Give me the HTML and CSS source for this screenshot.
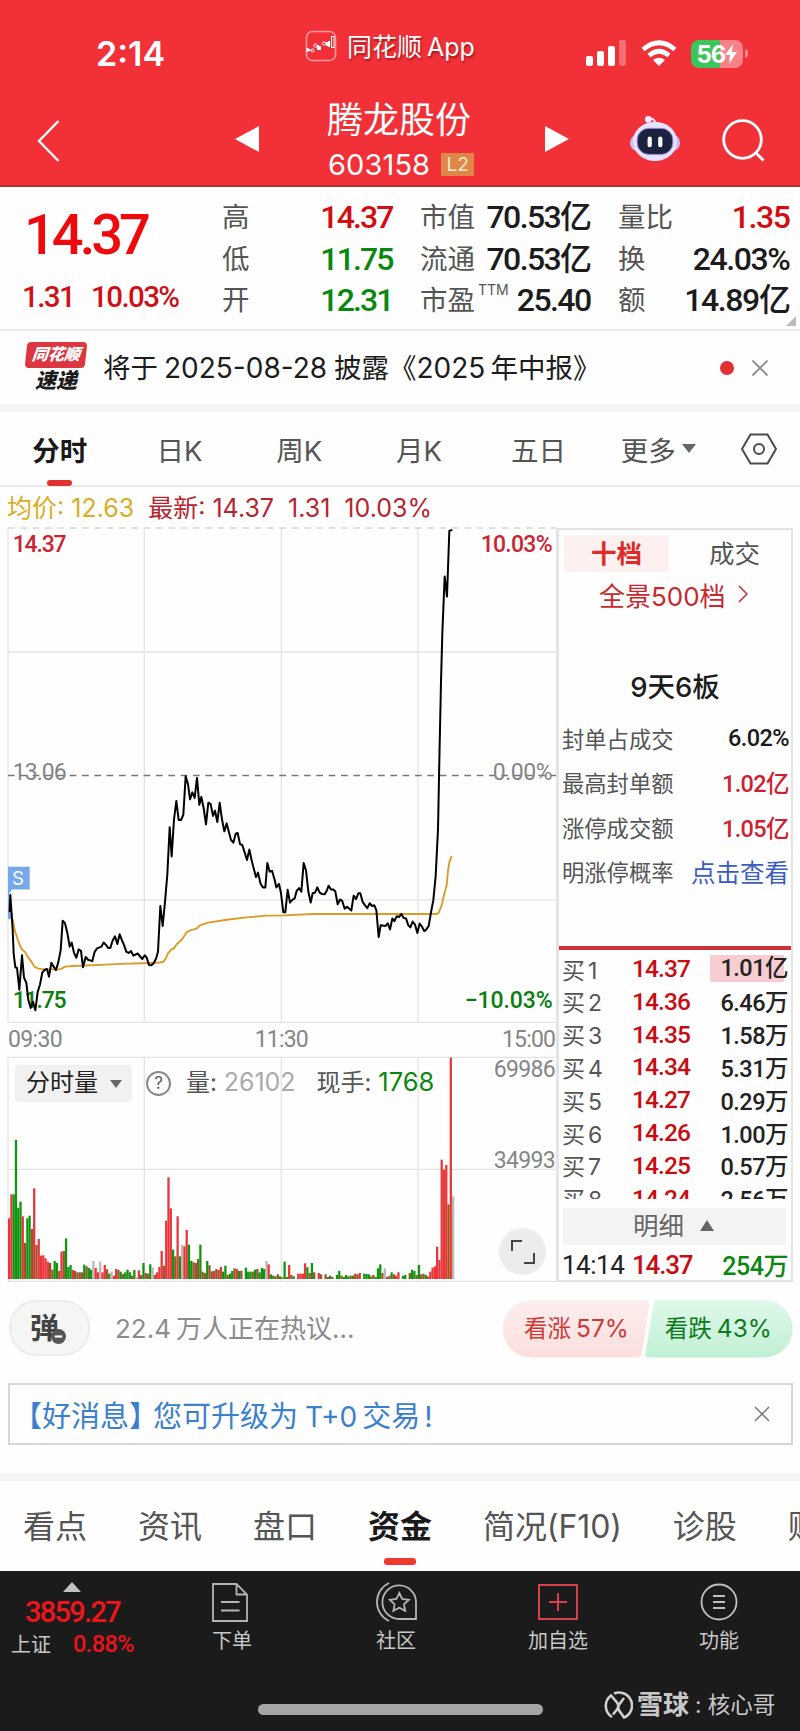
FILE: index.html
```
<!DOCTYPE html>
<html lang="zh-CN">
<head>
  <meta charset="utf-8">
  <title>腾龙股份 603158</title>
  <link rel="stylesheet" href="styles.css">
</head>
<body>
  <header class="header">
    <div class="statusbar">
      <span class="clock">2:14</span>
      <div class="app">
        <svg class="app-icon" width="32" height="32" viewBox="0 0 32 32" fill="none" stroke="#fff">
          <rect x="1.5" y="1.5" width="29" height="29" rx="6" stroke="#ff9a9a" stroke-width="1.6"/>
          <path d="M2.5 18v4M4.500 19v2M13 15v5M15 16v4M24 11v6M22 12v4" stroke-width="2"/>
          <circle cx="7.500" cy="20.500" r="1.500"/><circle cx="10.500" cy="15.500" r="1.600"/><circle cx="19" cy="13.500" r="1.600"/>
          <rect x="26.500" y="6.500" width="2.500" height="11"/>
        </svg>
        <span>同花顺 App</span>
      </div>
      <div class="sys">
        <svg width="40" height="27" viewBox="0 0 40 27" fill="#fff">
          <rect x="0" y="16" width="7" height="10" rx="2"/><rect x="11" y="11" width="7" height="15" rx="2"/>
          <rect x="22" y="6" width="7" height="20" rx="2"/><rect x="33" y="0" width="7" height="26" rx="2" opacity=".3"/>
        </svg>
        <svg class="wifi" width="36" height="27" viewBox="0 0 36 27" fill="none" stroke="#fff" stroke-width="4.600">
          <path d="M2 9.500Q18-4 34 9.500M8 15.500Q18 7 28 15.500"/>
          <path d="M12 20Q18 15.500 24 20L18 26Z" fill="#fff" stroke="none"/>
        </svg>
        <div class="battery"><span>56</span><svg width="12" height="20" viewBox="0 0 12 20"><path d="M8 0L0 11h5l-1 9 8-12H7z" fill="#fff"/></svg></div>
        <i class="nub"></i>
      </div>
    </div>
    <div class="titlebar">
      <svg class="back" width="24" height="42" viewBox="0 0 24 42" fill="none" stroke="#fff" stroke-width="2.400"><path d="M22.500 1L3 21l19.500 20"/></svg>
      <svg class="prev" width="24" height="26" viewBox="0 0 24 26"><path d="M24 0v26L0 13z" fill="#fff"/></svg>
      <div class="stock">
        <div class="name">腾龙股份</div>
        <div class="code">603158<b>L2</b></div>
      </div>
      <svg class="next" width="24" height="26" viewBox="0 0 24 26"><path d="M0 0v26l24-13z" fill="#fff"/></svg>
      <svg class="robot" width="50" height="47" viewBox="0 0 52 48">
        <path d="M26 8q0-5-7-5" fill="none" stroke="#eee9ff" stroke-width="2"/><circle cx="19" cy="4" r="3.500" fill="#f3efff"/>
        <rect x="0" y="20" width="52" height="17" rx="8" fill="#c4baf6"/>
        <ellipse cx="26" cy="27" rx="23" ry="20.500" fill="#e6e1fd"/>
        <rect x="7.500" y="13.500" width="37" height="27" rx="12" fill="#1b2240" stroke="#8d82cf" stroke-width="1"/>
        <path d="M20.500 24v7M31.500 24v7" stroke="#fff" stroke-width="4.400" stroke-linecap="round"/>
      </svg>
      <svg class="search" width="43" height="43" viewBox="0 0 43 43" fill="none" stroke="#fff" stroke-width="2.800"><circle cx="20.500" cy="20.500" r="18.800"/><path d="M33.500 33.500l8 8"/></svg>
    </div>
  </header>

  <section class="quote">
    <div class="last">
      <div class="price num">14.37</div>
      <div class="change num"><span>1.31</span><span>10.03%</span></div>
    </div>
    <dl class="stats c1">
      <div><dt>高</dt><dd class="red">14.37</dd></div>
      <div><dt>低</dt><dd class="green">11.75</dd></div>
      <div><dt>开</dt><dd class="green">12.31</dd></div>
    </dl>
    <dl class="stats c2">
      <div><dt>市值</dt><dd>70.53亿</dd></div>
      <div><dt>流通</dt><dd>70.53亿</dd></div>
      <div><dt>市盈<sup>TTM</sup></dt><dd>25.40</dd></div>
    </dl>
    <dl class="stats c3">
      <div><dt>量比</dt><dd class="red">1.35</dd></div>
      <div><dt>换</dt><dd>24.03%</dd></div>
      <div><dt>额</dt><dd>14.89亿</dd></div>
    </dl>
    <i class="corner"></i>
  </section>

  <section class="news">
    <div class="news-logo"><span class="brand">同花顺</span><span class="express">速递</span></div>
    <p>将于<span class="date">2025-08-28</span>披露<span class="report">《<span class="yr">2025</span>年中报》</span></p>
    <i class="dot"></i>
    <svg width="18" height="18" viewBox="0 0 18 18" stroke="#8c8c8c" stroke-width="1.800"><path d="M1.500 1.500l15 15M16.500 1.500l-15 15"/></svg>
  </section>

  <nav class="tabs">
    <a class="on">分时</a><a>日K</a><a>周K</a><a>月K</a><a>五日</a><a>更多<i class="caret"></i></a>
    <svg width="36" height="32" viewBox="0 0 36 32" fill="none" stroke="#4a4a4a" stroke-width="2"><path d="M9.500 1.500h17L35 16l-8.500 14.500h-17L1 16z"/><circle cx="18" cy="16" r="5"/></svg>
  </nav>

  <div class="legend"><span class="avg">均价: 12.63</span><span>最新: 14.37</span><span>1.31</span><span>10.03%</span></div>

  <main class="market">
    <div class="charts">
      <svg class="price-chart" width="558" height="525" viewBox="0 21 1674 1525" preserveAspectRatio="none">
        <g stroke="#e4e4e4" stroke-width="4" fill="none">
          <path d="M24 24V1460M433 24V1460M844 24V1460M1254 24V1460M24 384H1668M24 1104H1668M24 1460H1668"/>
        </g>
        <path d="M24 24H1668" stroke="#c2c2c2" stroke-width="3" stroke-dasharray="20 17"/>
        <path d="M24 743H1668" stroke="#777" stroke-width="4" stroke-dasharray="20 17"/>
        <g class="axis">
          <text x="38" y="93" textLength="162" class="up">14.37</text>
          <text x="1442" y="93" textLength="216" class="up">10.03%</text>
          <text x="38" y="755" textLength="162">13.06</text>
          <text x="1478" y="755" textLength="180">0.00%</text>
          <text x="38" y="1418" textLength="162" class="down">11.75</text>
          <text x="1394" y="1418" textLength="264" class="down">−10.03%</text>
          <text x="24" y="1532" textLength="164">09:30</text>
          <text x="764" y="1532" textLength="162">11:30</text>
          <text x="1506" y="1532" textLength="162">15:00</text>
        </g>
        <path d="M24 1008h65v66H36l-8 10v76h-4z" fill="#76a9ea"/>
        <path d="M24 1142h14v18H24z" fill="#76a9ea"/>
        <text x="36" y="1062" class="mark">S</text>
        <polyline fill="none" stroke="#dd9a26" stroke-width="5.500" points="38,1160 45,1195 55,1225 65,1247 75,1255 85,1272 95,1285 103,1298 115,1304 135,1306 180,1306 195,1298 220,1296 300,1293 360,1290 430,1288 480,1286 490,1284 497,1275 505,1258 515,1248 522,1245 530,1233 545,1220 560,1198 572,1192 582,1190 590,1187 600,1178 625,1170 680,1162 740,1155 800,1150 850,1149 940,1145 1310,1145 1316,1142 1325,1120 1332,1090 1340,1062 1344,1020 1348,995 1355,977"/>
        <polyline fill="none" stroke="#000" stroke-width="6" stroke-linejoin="round" points="29,1140 31,1090 38,1190 41,1260 46,1300 51,1302 58,1365 66,1265 72,1330 79,1345 85,1395 92,1418 99,1400 106,1425 113,1372 120,1350 127,1315 134,1308 141,1305 147,1327 154,1287 161,1298 168,1308 175,1285 182,1250 188,1165 195,1172 202,1200 209,1240 215,1228 222,1258 229,1272 236,1248 243,1252 249,1300 257,1270 264,1278 277,1282 284,1255 291,1245 304,1240 311,1228 318,1235 325,1244 331,1244 338,1222 345,1210 352,1232 359,1204 366,1222 372,1235 379,1255 386,1258 393,1253 400,1266 413,1260 420,1268 427,1276 434,1265 440,1272 447,1293 454,1294 461,1288 468,1275 474,1255 481,1122 488,1180 495,1110 502,1030 509,893 515,978 522,870 529,817 536,872 543,872 550,857 557,745 564,768 570,812 577,792 584,808 591,750 598,828 604,805 611,838 618,885 625,822 632,826 639,860 645,845 652,878 659,822 666,870 673,905 680,882 693,930 700,938 707,912 713,910 720,942 727,945 741,988 748,958 755,990 768,1038 774,1025 782,1058 789,1068 796,1068 802,997 809,1022 816,1020 823,1042 829,1068 837,1058 843,1085 850,1140 856,1140 863,1075 870,1112 877,1104 884,1100 890,1078 897,1070 904,1080 911,997 918,1018 925,1080 932,1112 938,1085 945,1083 952,1068 959,1083 966,1087 974,1088 980,1078 986,1063 993,1074 1000,1074 1006,1080 1013,1117 1020,1103 1027,1108 1034,1130 1041,1124 1054,1135 1061,1092 1068,1102 1075,1085 1081,1085 1088,1110 1095,1120 1102,1128 1109,1114 1116,1122 1123,1120 1129,1134 1136,1212 1142,1178 1157,1180 1163,1172 1170,1190 1177,1158 1183,1166 1190,1152 1197,1154 1204,1145 1211,1157 1218,1158 1225,1178 1231,1184 1238,1167 1245,1176 1252,1200 1259,1173 1266,1182 1273,1195 1279,1190 1286,1180 1293,1140 1300,1105 1307,1035 1314,900 1318,700 1323,470 1327,330 1334,165 1341,223 1348,32 1357,30"/>
      </svg>
      <div class="volume">
        <svg width="558" height="232" viewBox="0 6 1674 696">
          <path d="M24 22V692M433 22V692M844 22V692M1254 22V692M24 22H1668M24 358H1668M24 694H1668" stroke="#e4e4e4" stroke-width="4" fill="none"/>
          <g id="bars"></g>
          <g class="axis">
            <text x="1481" y="80" textLength="186">69986</text>
            <text x="1481" y="354" textLength="186">34993</text>
          </g>
        </svg>
        <div class="vol-bar">
          <span class="vol-type">分时量<i class="caret"></i></span>
          <span class="help">?</span>
          <span class="vol">量: <em>26102</em></span>
          <span class="hand">现手: <em>1768</em></span>
        </div>
        <div class="expand"><svg width="24" height="24" viewBox="0 0 24 24" fill="none" stroke="#444" stroke-width="2"><path d="M1 11V1h10M23 13v10H13"/></svg></div>
      </div>
    </div>

    <aside class="side">
      <div class="side-tabs"><span class="on">十档</span><span>成交</span></div>
      <div class="full">全景500档<svg width="10" height="18" viewBox="0 0 10 18" fill="none" stroke="#c8282d" stroke-width="1.500"><path d="M1 1l8 8-8 8"/></svg></div>
      <div class="streak">9天6板</div>
      <ul class="limit">
        <li><span>封单占成交</span><b class="black">6.02%</b></li>
        <li><span>最高封单额</span><b>1.02亿</b></li>
        <li><span>涨停成交额</span><b>1.05亿</b></li>
        <li><span>明涨停概率</span><a>点击查看</a></li>
      </ul>
      <ul class="bids">
        <li><span>买<i>1</i></span><b>14.37</b><em class="hot">1.01亿</em></li>
        <li><span>买<i>2</i></span><b>14.36</b><em>6.46万</em></li>
        <li><span>买<i>3</i></span><b>14.35</b><em>1.58万</em></li>
        <li><span>买<i>4</i></span><b>14.34</b><em>5.31万</em></li>
        <li><span>买<i>5</i></span><b>14.27</b><em>0.29万</em></li>
        <li><span>买<i>6</i></span><b>14.26</b><em>1.00万</em></li>
        <li><span>买<i>7</i></span><b>14.25</b><em>0.57万</em></li>
        <li><span>买<i>8</i></span><b>14.24</b><em>2.56万</em></li>
      </ul>
      <div class="detail">明细<i class="caret up"></i></div>
      <div class="tick"><span>14:14</span><b>14.37</b><em>254万</em></div>
    </aside>
  </main>

  <section class="talk">
    <div class="danmu">弹<svg width="15" height="15" viewBox="0 0 14 14"><circle cx="7" cy="7" r="7" fill="#555"/><path d="M3.500 7h7" stroke="#fff" stroke-width="2"/></svg></div>
    <p>22.4<span>万人正在热议...</span></p>
    <div class="vote">
      <svg width="290" height="58" viewBox="0 0 290 58">
        <defs>
          <linearGradient id="bull" x2="0" y2="1"><stop stop-color="#fdeeee"/><stop offset="1" stop-color="#fbdfdd"/></linearGradient>
          <linearGradient id="bear" x2="0" y2="1"><stop stop-color="#e0f8ea"/><stop offset="1" stop-color="#c0f0d3"/></linearGradient>
        </defs>
        <path d="M28.500 0H143q4 0 3.500 4l-8 50q-.7 3.500-4 3.500H28.500a28.700 28.700 0 010-57.500z" fill="url(#bull)"/>
        <path d="M155 0h106a28.700 28.700 0 010 57.500H146q-4 0-3.500-3.500l8-50q.8-4 4.500-4z" fill="url(#bear)"/>
      </svg>
      <div class="vote-text"><span class="bull">看涨<i>57%</i></span><span class="bear">看跌<i>43%</i></span></div>
    </div>
  </section>

  <section class="notice">
    <p><span>【好消息】</span>您可升级为<span class="t0">T+0</span>交易<span class="ex">!</span></p>
    <svg width="16" height="16" viewBox="0 0 16 16" stroke="#777" stroke-width="1.500"><path d="M1 1l14 14M15 1L1 15"/></svg>
  </section>

  <nav class="info-tabs"><a>看点</a><a>资讯</a><a>盘口</a><a class="on">资金</a><a>简况(F10)</a><a>诊股</a><a>财务</a></nav>

  <footer class="footer">
    <div class="menu">
      <div class="index">
        <i></i>
        <div class="idx num">3859.27</div>
        <div class="sh">上证<b class="num">0.88%</b></div>
      </div>
      <a>
        <svg class="doc" width="36" height="40" viewBox="0 0 36 40" fill="none" stroke="#b4b4b4" stroke-width="1.800"><path d="M1 2h23.500L35 12.500V39H1zM24.500 2v10.500H35M9 20h18.500M9 28.500h18.500"/></svg>
        下单
      </a>
      <a>
        <svg width="42" height="40" viewBox="0 0 42 40" fill="none" stroke="#b4b4b4" stroke-width="1.800"><path d="M14 1a21 21 0 000 38M41 37H24A16.800 16.800 0 1141 20.500zM24.300 11l2.900 6 6.600.8-4.800 4.500 1.200 6.500-5.900-3.100-5.900 3.100 1.200-6.500-4.800-4.500 6.600-.8z"/></svg>
        社区
      </a>
      <a>
        <svg width="40" height="40" viewBox="0 0 40 40" fill="none" stroke="#d8404a" stroke-width="2"><path d="M1 3h38v34H1zM20 11v18M11 20h18"/></svg>
        加自选
      </a>
      <a>
        <svg width="38" height="40" viewBox="0 0 38 40" fill="none" stroke="#c0c0c0" stroke-width="1.800"><circle cx="19" cy="20" r="17.500"/><path d="M13 14h12M13 20h12M13 26h12"/></svg>
        功能
      </a>
    </div>
    <div class="bottom">
      <i class="home"></i>
      <div class="source">
        <svg width="30" height="30" viewBox="0 0 30 30" fill="none" stroke="#d0d0d0" stroke-width="2.600"><path d="M9 26A13 13 0 018 4.500l6 7q2.500 3.500 0 7l-4 5M11 2.500A13 13 0 0121 26.500l-4.500-6.500q-2.500-3.500 0-7L21 7"/></svg>
        <b>雪球</b><span>: 核心哥</span>
      </div>
    </div>
  </footer>

  <script>
    // one entry per minute: colour letter + height
    var volume = "r182 r254 g254 g417 g213 g232 r188 b108 g182 g190 b150 r272 b102 r120 r70 r71 r62 r52 b48 b28 g54 g48 r24 r82 b84 g122 g36 g42 r27 b24 b20 b20 b20 g43 b38 g33 g28 w54 r33 r20 w52 r20 r42 b29 g16 w22 r10 r30 b27 g22 b15 g20 g28 g20 b10 g27 w6 r26 b12 g48 b18 b16 g44 w34 r12 r20 r36 r84 b40 r175 r305 r212 g88 b68 r188 g68 w103 r98 r147 g103 g54 b50 b48 b60 g103 b22 b18 g54 b41 b23 r24 b30 b27 r36 g22 g40 b12 g16 g24 b32 r30 g24 b25 g0 g34 g22 g22 b22 g28 b30 g20 g33 g30 w54 r44 g14 b10 g8 b14 g8 r5 g52 g6 r42 b12 g8 g0 r16 r16 r16 r47 g35 b18 g48 b20 g0 r18 b14 g0 b14 b6 g10 b6 g0 g12 g24 b10 g6 g12 g8 b10 g10 r16 b14 r18 g0 g16 g15 g14 b8 b12 g6 g32 g44 b18 w32 b6 r10 g20 b14 r10 r20 g0 g10 g12 g0 b18 g28 g24 b12 g42 b14 b16 g12 r8 r22 r34 r38 r97 r57 r358 r328 r342 o224 r664 w248".split(" ");
    var colors = { r: "#e8363a", g: "#0f960f", b: "#96562a", w: "#c0b4b4", o: "#8a6210" };
    var bars = document.getElementById("bars");
    for (var i = 0; i < volume.length; i++) {
      var h = Number(volume[i].slice(1));
      var bar = document.createElementNS("http://www.w3.org/2000/svg", "rect");
      bar.setAttribute("x", 24 + i * 6.83);
      bar.setAttribute("y", 687 - h);
      bar.setAttribute("width", 6.83);
      bar.setAttribute("height", h);
      bar.setAttribute("fill", colors[volume[i][0]]);
      bars.appendChild(bar);
    }
  </script>
</body>
</html>
```

FILE: styles.css
```
* {
  box-sizing: border-box;
  margin: 0;
  padding: 0;
}
body {
  width: 800px;
  height: 1731px;
  overflow: hidden;
  background: #fefefe;
  color: #1c1c1c;
  font-family: Inter, "Noto Sans CJK SC", sans-serif;
}
i, em {
  font-style: normal;
}
ul {
  list-style: none;
}
svg {
  display: block;
  flex: none;
}
.num, dd {
  font-family: Roboto, "Noto Sans CJK SC", sans-serif;
  font-weight: 500;
}
.red { color: #d40b10; }
.green { color: #0a870f; }

/* header */
.header {
  height: 187px;
  background: #f23038;
  border-bottom: 2px solid #b4303a;
  color: #fff;
}
.statusbar {
  display: flex;
  height: 93px;
  padding-left: 96px;
}
.clock {
  width: 209px;
  padding-top: 33px;
  line-height: 42px;
  font-size: 34px;
  font-weight: 600;
}
.app {
  display: flex;
  width: 281px;
  padding-top: 30px;
  font-size: 25px;
  line-height: 34px;
  gap: 10px;
  word-spacing: -2px;
  text-shadow: 1px 2px 2px rgba(90, 0, 0, .5);
}
.sys {
  display: flex;
  padding-top: 40px;
}
.wifi { margin: 0 14px 0 15px; }
.battery {
  display: flex;
  align-items: center;
  justify-content: center;
  width: 52px;
  height: 28px;
  border-radius: 8px;
  background: linear-gradient(90deg, #3cc55b 56%, #f78288 56%);
  font-size: 24px;
  font-weight: 700;
  letter-spacing: -1px;
}
.nub {
  width: 3px;
  height: 9px;
  margin: 9px 0 0 2px;
  border-radius: 0 3px 3px 0;
  background: #f78288;
}
.titlebar {
  display: flex;
}
.back { margin: 27px 0 0 36px; }
.prev { margin: 33px 0 0 175px; }
.stock {
  width: 286px;
  padding-left: 68px;
}
.name {
  height: 54px;
  font-size: 36px;
  line-height: 54px;
}
.code {
  display: flex;
  align-items: center;
  height: 34px;
  padding-left: 1px;
  font-size: 29px;
  letter-spacing: .1px;
}
.code b {
  width: 33px;
  height: 23px;
  margin-left: 11px;
  background: #df8747;
  color: #ffe9cf;
  font-size: 19px;
  line-height: 23px;
  font-weight: 400;
  text-align: center;
}
.next { margin-top: 33px; }
.robot { margin: 22px 0 0 61px; }
.search { margin: 26px 0 0 42px; }

/* quote */
.quote {
  display: flex;
  position: relative;
  height: 144px;
  border-bottom: 2px solid #ececec;
}
.last {
  width: 222px;
}
.price {
  padding: 14px 0 0 24px;
  height: 84px;
  color: #ee0a0c;
  font-size: 56px;
  line-height: 68px;
  letter-spacing: -4px;
}
.change {
  display: flex;
  gap: 17px;
  padding-left: 22px;
  color: #cf1016;
  font-size: 29.500px;
  line-height: 52px;
  letter-spacing: -1.600px;
}
.stats {
  padding-top: 9px;
}
.stats div {
  display: flex;
  justify-content: space-between;
  height: 41.500px;
  line-height: 42px;
}
.stats dt {
  color: #555;
  font-size: 27.500px;
}
.stats dd {
  margin-right: 1.500px;
  font-size: 32px;
  letter-spacing: -1.600px;
}
.stats sup {
  display: inline-block;
  margin-left: 3px;
  font-size: 14px;
  line-height: 14px;
  vertical-align: 15px;
}
.c1 { width: 172px; }
.c1 dd { letter-spacing: -1.900px; }
.c2 { width: 172px; margin-left: 26px; }
.c3 { width: 173px; margin-left: 26px; }
.c3 dd { letter-spacing: -1.400px; }
.corner {
  position: absolute;
  right: 4px;
  bottom: 3px;
  border: 5px solid transparent;
  border-right-color: #bbb;
  border-bottom-color: #bbb;
}

/* news */
.news {
  display: flex;
  align-items: center;
  height: 81px;
  border-bottom: 8px solid #f4f4f4;
}
.news-logo {
  width: 60px;
  margin-left: 26px;
  font-weight: 900;
  font-style: italic;
  text-align: center;
}
.brand {
  display: block;
  height: 26px;
  border-radius: 4px;
  background: #dc3640;
  color: #fff;
  font-size: 16px;
  line-height: 25px;
  transform: skewX(-6deg);
}
.express {
  display: block;
  font-size: 21px;
  line-height: 26px;
}
.news p {
  width: 617px;
  margin-left: 17px;
  font-size: 27.500px;
  line-height: 40px;
  white-space: nowrap;
}
.date {
  margin: 0 7px 0 6px;
  font-size: 28px;
}
.yr {
  margin-right: 5px;
  font-size: 28px;
}
.dot {
  width: 14px;
  height: 14px;
  border-radius: 50%;
  background: #e03031;
}
.news svg { margin-left: 17px; }

/* period tabs */
.tabs {
  display: flex;
  align-items: center;
  height: 75px;
  border-bottom: 2px solid #e9e9e9;
  color: #555;
  font-size: 27.500px;
}
.tabs a {
  display: flex;
  align-items: center;
  justify-content: center;
  position: relative;
  width: 119.700px;
  height: 74px;
}
.tabs .on {
  color: #1a1a1a;
  font-weight: 700;
}
.tabs .on::after {
  content: "";
  position: absolute;
  left: 47px;
  bottom: 0;
  width: 25px;
  height: 6px;
  border-radius: 3px;
  background: #e3312f;
}
.tabs svg { margin-left: 23px; }
.caret {
  display: inline-block;
  border: 7px solid transparent;
  border-top: 9px solid #666;
  border-bottom: 0;
  margin-left: 6px;
}
.caret.up {
  border-top: 0;
  border-bottom: 11px solid #666;
}
.legend {
  display: flex;
  gap: 14px;
  height: 40px;
  padding-left: 7px;
  color: #b52530;
  font-size: 25px;
  line-height: 43px;
}
.legend .avg { color: #d9ad25; }

/* charts */
.market {
  display: flex;
  height: 757px;
}
.charts {
  width: 556px;
}
.axis {
  fill: #858585;
  font-family: Roboto, sans-serif;
  font-size: 69px;
}
.up { fill: #cc2430; }
.down { fill: #0a7f10; }
.axis .up, .axis .down { font-weight: 500; }
.mark {
  fill: #fff;
  font-size: 56px;
}
.volume {
  position: relative;
}
.vol-bar {
  display: flex;
  align-items: center;
  position: absolute;
  left: 15px;
  top: 13px;
  height: 37px;
  color: #555;
  font-size: 24px;
  line-height: 34px;
  white-space: nowrap;
}
.vol-type {
  display: flex;
  align-items: center;
  width: 117px;
  height: 37px;
  padding: 0 0 2px 11px;
  border-radius: 4px;
  background: #f1f1f1;
  color: #222;
}
.vol-type .caret { margin: 2px 0 0 12px; border-width: 8px 6px 0; }
.help {
  width: 25px;
  height: 25px;
  margin: 0 15px 0 14px;
  border: 2px solid #888;
  border-radius: 50%;
  font-size: 17px;
  line-height: 21px;
  text-align: center;
}
.vol, .hand { padding-bottom: 2px; }
.vol em { color: #aaa; font-size: 25px; }
.hand { margin-left: 21px; }
.hand em { color: #0a870f; font-size: 25.500px; }
.expand {
  display: flex;
  align-items: center;
  justify-content: center;
  position: absolute;
  left: 499px;
  top: 176px;
  width: 47px;
  height: 47px;
  border-radius: 50%;
  background: #ececec;
}

/* order book */
.side {
  position: relative;
  width: 237px;
  height: 754px;
  margin-top: 1px;
  border: solid #e4e4e4;
  border-width: 2px 2px 2px 3px;
  background: #fefefe;
  white-space: nowrap;
}
.side-tabs {
  display: flex;
  gap: 13px;
  padding: 5px 0 0 5px;
  color: #555;
  font-size: 25.500px;
  line-height: 37px;
  text-align: center;
}
.side-tabs span { width: 105px; }
.side-tabs .on {
  background: #fdf0f0;
  color: #df2a28;
  font-weight: 700;
}
.full {
  display: flex;
  align-items: center;
  height: 44px;
  padding-left: 40px;
  color: #c8282d;
  font-size: 26px;
}
.full svg { margin-left: 12px; }
.streak {
  padding-top: 51px;
  height: 100px;
  font-size: 27.500px;
  line-height: 40px;
  text-align: center;
  font-weight: 500;
}
.limit li {
  display: flex;
  justify-content: space-between;
  align-items: center;
  height: 44.300px;
  padding: 0 2px 0 3px;
  color: #555;
  font-size: 22.300px;
}
.limit b, .bids b, .bids em, .tick b, .tick em, .tick span {
  font-family: Roboto, "Noto Sans CJK SC", sans-serif;
  font-weight: 500;
}
.limit b {
  color: #cf1f33;
  font-size: 23.500px;
  letter-spacing: -.6px;
}
.limit .black { color: #1a1a1a; }
.limit a {
  color: #3a5cc2;
  font-size: 24.500px;
}
.bids {
  height: 253px;
  margin-top: 53px;
  padding-top: 2px;
  border-top: 4px solid #cd3138;
  overflow: hidden;
}
.bids li, .tick {
  display: flex;
  align-items: center;
  height: 32.800px;
  padding: 0 3px;
  color: #555;
  font-size: 23px;
}
.bids i { margin-left: 3px; }
.bids span, .tick span { width: 70px; }
.bids b, .tick b {
  color: #c90c12;
  font-size: 24.500px;
  letter-spacing: -.9px;
}
.bids em, .tick em {
  margin-left: auto;
  color: #222;
  font-size: 23.500px;
  letter-spacing: -.5px;
}
.bids .hot {
  padding-left: 10px;
  background: linear-gradient(90deg, #f8cdd2 95%, transparent 95%);
  line-height: 27px;
}
.detail {
  display: flex;
  align-items: center;
  width: 223px;
  height: 37px;
  margin: 9px 0 0 4px;
  padding: 0 0 6px 70px;
  background: #f3f3f3;
  color: #666;
  font-size: 25.500px;
}
.detail .caret { margin: 3px 0 0 16px; }
.tick {
  height: 40px;
}
.tick span {
  color: #222;
  font-size: 26px;
  font-weight: 400;
  letter-spacing: -.5px;
}
.tick b { font-size: 26px; letter-spacing: -1.200px; }
.tick em { padding-bottom: 3px; color: #0a870f; font-size: 25px; }

/* discussion */
.talk {
  display: flex;
  height: 99px;
  padding: 16px 0 0 9px;
}
.danmu {
  display: flex;
  align-items: center;
  width: 81px;
  height: 56px;
  padding: 0 0 4px 19px;
  border: 2px solid #ececec;
  border-radius: 27px;
  background: #f5f5f5;
  color: #444;
  font-size: 29px;
  font-weight: 700;
}
.danmu svg { margin: 20px 0 0 -8px; }
.talk p {
  width: 388px;
  margin-left: 25px;
  color: #8c8c8c;
  font-size: 26px;
  line-height: 57px;
}
.talk p span { margin-left: 5px; }
.vote { position: relative; }
.vote-text {
  position: absolute;
  left: 21px;
  top: 0;
  display: flex;
  gap: 36px;
  font-size: 23.500px;
  line-height: 57px;
  white-space: nowrap;
}
.vote i { margin-left: 5px; font-size: 24.500px; }
.bull { color: #cc3a38; }
.bear { color: #0c7a1c; }

/* notice */
.notice {
  display: flex;
  align-items: center;
  justify-content: space-between;
  width: 785px;
  height: 62px;
  margin-left: 8px;
  padding: 0 21px 0 3px;
  border: 2px solid #d6d6d6;
  color: #3a80cf;
  font-size: 29px;
  white-space: nowrap;
}
.notice p span { margin-right: -5px; }
.notice p .t0 { margin: 0 5px 0 7px; font-size: 28px; }
.notice p .ex { margin: 0 0 0 4px; }

/* info tabs */
.info-tabs {
  display: flex;
  gap: 51px;
  height: 126px;
  padding: 36px 0 0 23px;
  overflow: hidden;
  color: #555;
  font-size: 32px;
  line-height: 92px;
  white-space: nowrap;
  background: linear-gradient(#f4f4f4, #f4f4f4) 0 28px / 100% 8px no-repeat;
}
.info-tabs a { position: relative; flex: none; }
.info-tabs a:nth-child(5) { letter-spacing: -.1px; }
.info-tabs .on {
  color: #1a1a1a;
  font-weight: 700;
}
.info-tabs .on::after {
  content: "";
  position: absolute;
  left: 16px;
  top: 77px;
  width: 32px;
  height: 7px;
  border-radius: 3px;
  background: #ee3b30;
}

/* footer */
.footer {
  height: 160px;
  background: #1b1b1b;
  color: #c8c8c8;
}
.menu {
  display: grid;
  grid-template-columns: 144px 176px 152px 172px 150px;
  height: 120px;
}
.menu a {
  display: flex;
  flex-direction: column;
  align-items: center;
  padding-top: 11px;
  font-size: 20px;
  line-height: 38px;
}
.doc { margin-left: -5px; }
.index {
  padding-top: 11px;
}
.index i {
  display: block;
  width: 0;
  margin-left: 63px;
  border: 9px solid transparent;
  border-top: 0;
  border-bottom: 10px solid #c2c2c2;
}
.idx {
  height: 38px;
  padding-left: 25px;
  color: #f0151a;
  font-size: 29px;
  line-height: 41px;
  letter-spacing: -1.700px;
}
.sh {
  padding-left: 11px;
  font-size: 20px;
  line-height: 28px;
}
.sh b {
  margin-left: 22px;
  color: #e8141a;
  font-size: 23.500px;
  letter-spacing: -.6px;
}
.bottom {
  display: flex;
}
.home {
  width: 285px;
  height: 11px;
  margin: 13px 60px 0 258px;
  border-radius: 6px;
  background: #a6a6a6;
}
.source {
  display: flex;
  font-size: 22.500px;
  line-height: 28px;
  white-space: nowrap;
}
.source b {
  margin-left: 4px;
  font-size: 26px;
}
.source span { margin-left: 6px; }
```
